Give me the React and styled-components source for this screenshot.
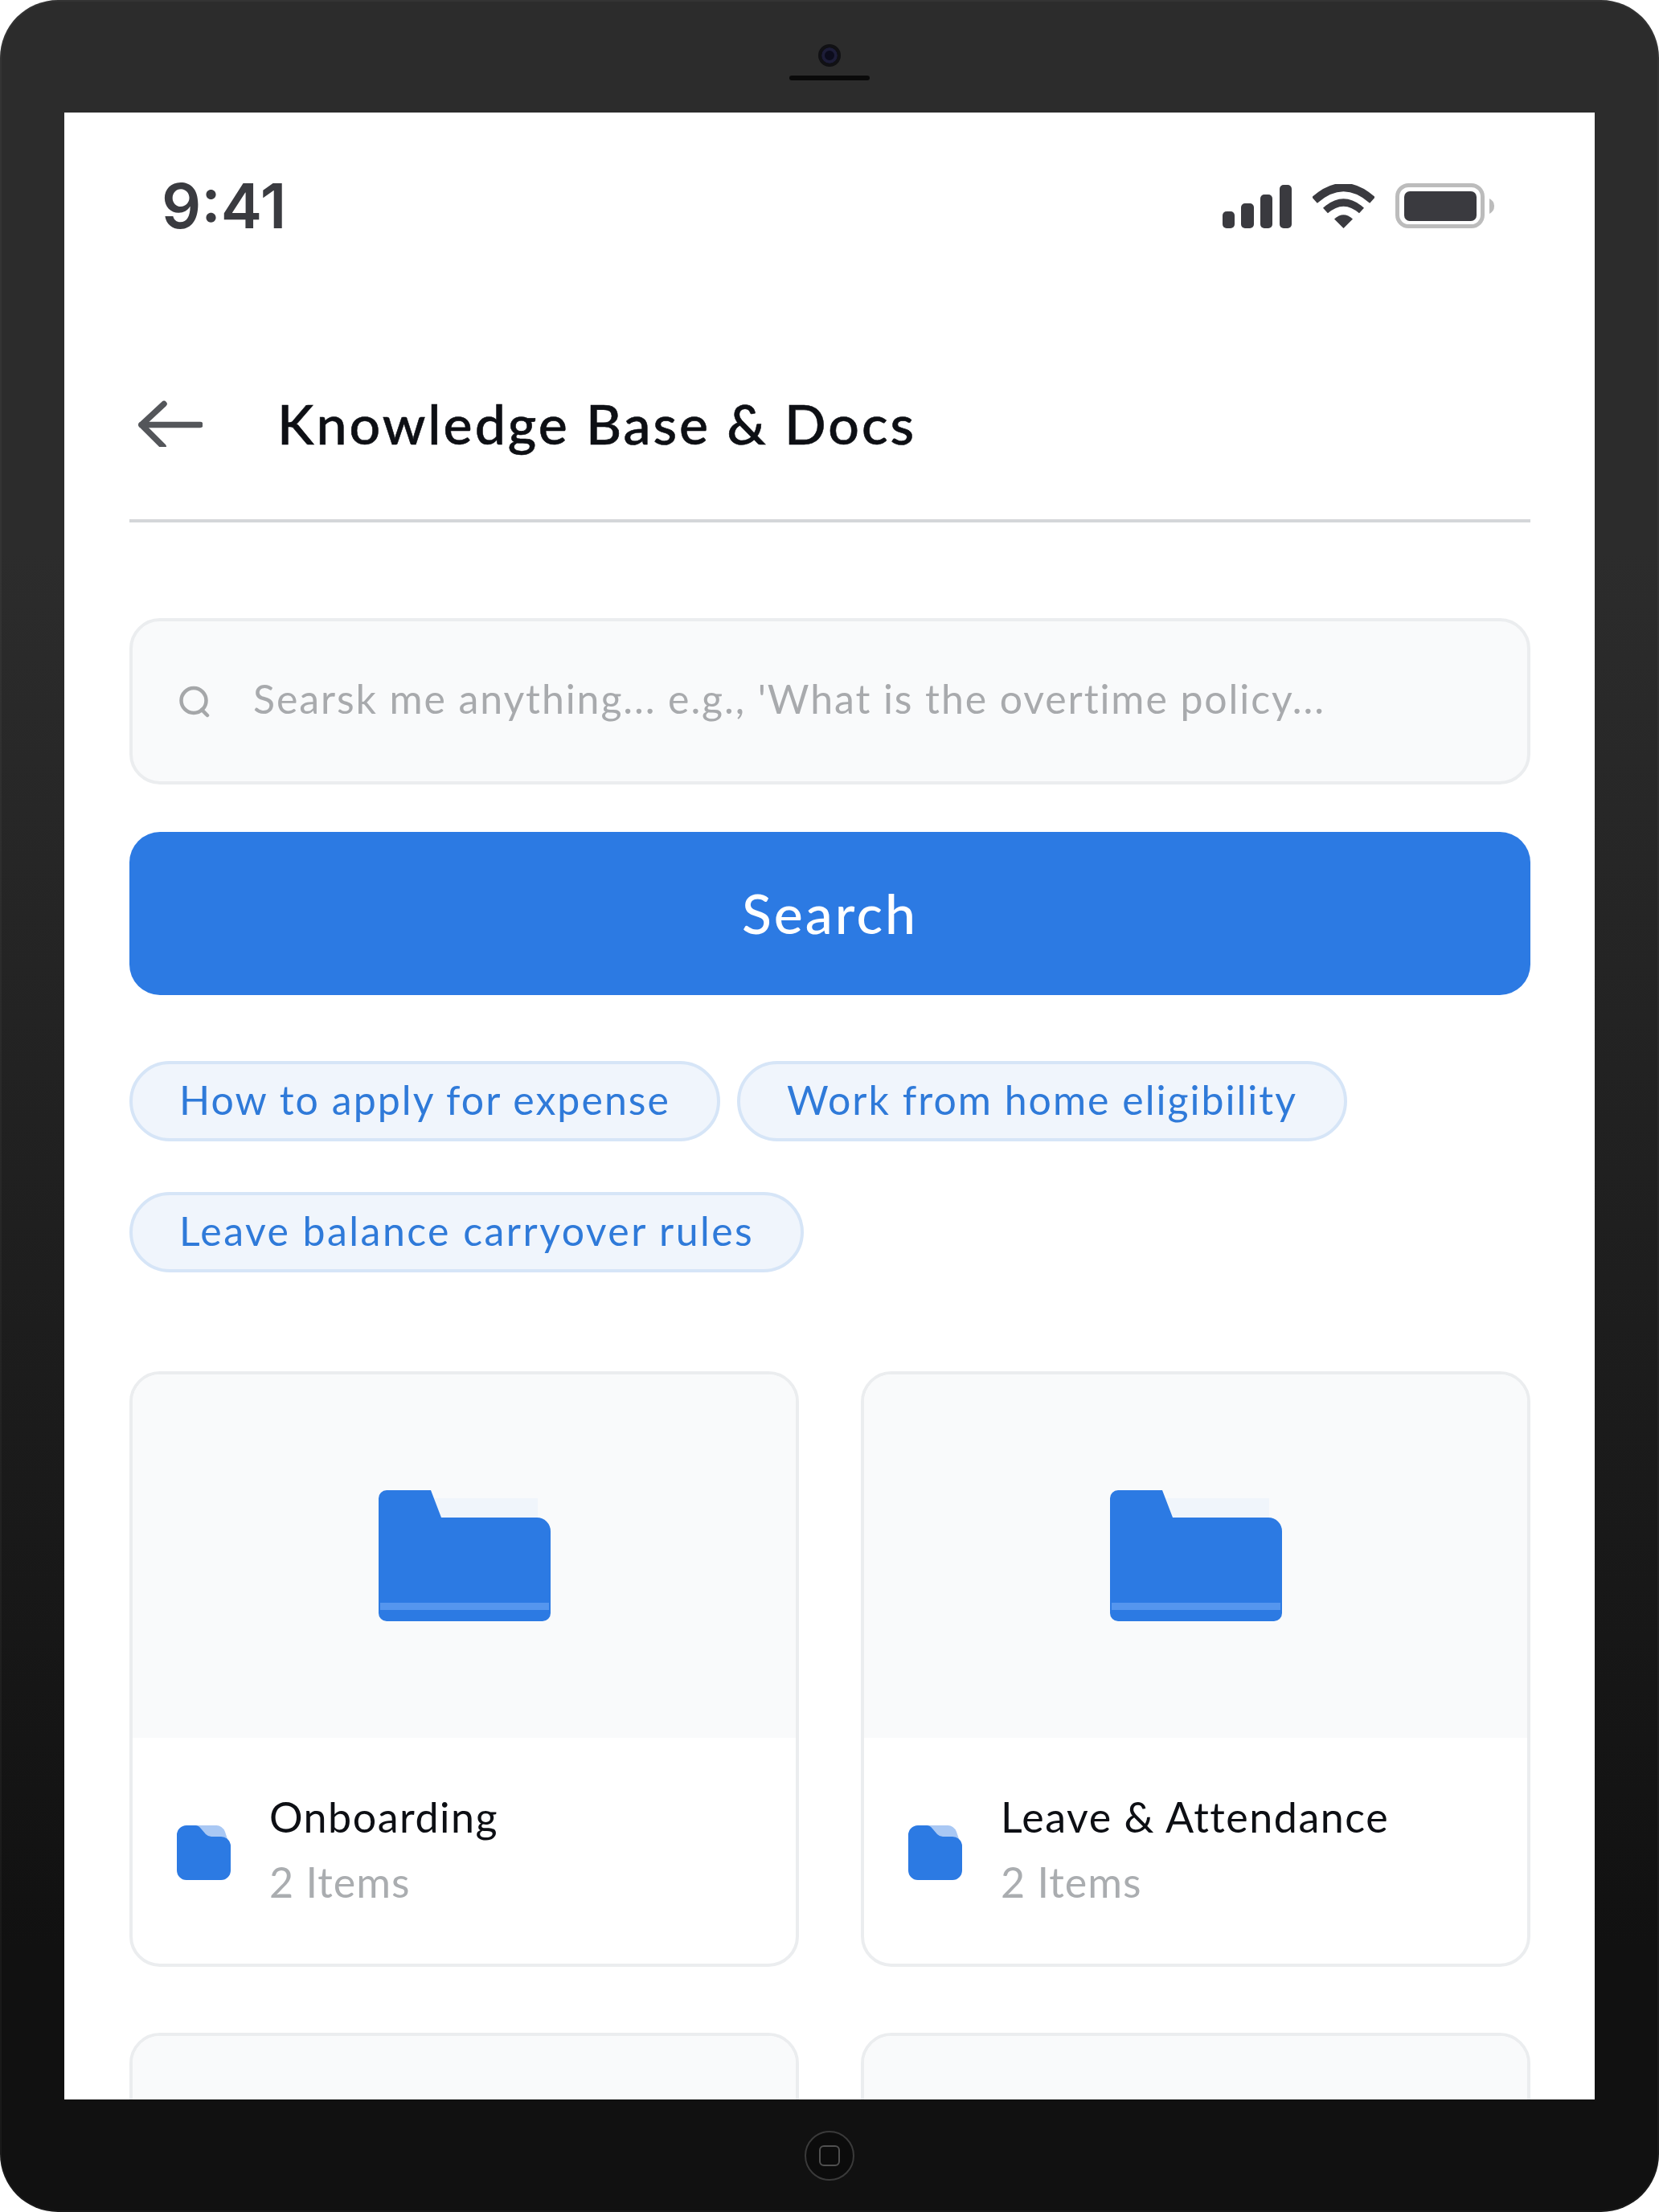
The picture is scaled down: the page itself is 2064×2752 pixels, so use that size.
import React from 'react';
import styled, { createGlobalStyle } from 'styled-components';

const BLUE = '#2c7ae3';

const GlobalStyle = createGlobalStyle`
    html, body {
        margin: 0;
        padding: 0;
        background: #ffffff;
    }
    * {
        box-sizing: border-box;
    }
`;

const SignalIcon = () => (
    <StatusSvg width="86" height="54" viewBox="0 0 86 54">
        <rect x="0" y="33" width="15" height="21" rx="5" />
        <rect x="23" y="23" width="16" height="31" rx="5" />
        <rect x="47" y="12" width="15" height="42" rx="5" />
        <rect x="71" y="0" width="15" height="54" rx="5" />
    </StatusSvg>
);

const WifiIcon = () => (
    <StatusSvg width="77" height="55" viewBox="0 0 77 55">
        <path d="M2.5 20 Q38.5 -12 74.5 20" fill="none" stroke="#3a3a3f" strokeWidth="10" />
        <path d="M16 33 Q38.5 13 61 33" fill="none" stroke="#3a3a3f" strokeWidth="9" />
        <path d="M27 43.5 Q38.5 33 50 43.5 L38.5 55 Z" />
    </StatusSvg>
);

const BatteryIcon = () => (
    <StatusSvg width="123" height="56" viewBox="0 0 123 56">
        <rect x="2.5" y="2.5" width="106" height="51" rx="14" fill="none" stroke="#bcbcbc" strokeWidth="5" />
        <rect x="11" y="10" width="90" height="37" rx="7" />
        <path d="M117 19 Q123 22 123 28.5 Q123 35 117 38 Z" fill="#bcbcbc" />
    </StatusSvg>
);

const BackArrow = () => (
    <svg width="80" height="60" viewBox="0 -3 80 60" fill="none" stroke="#54565a" strokeWidth="7.5" strokeLinecap="round" strokeLinejoin="round">
        <path d="M4 29.5 H77" />
        <path d="M32 3.5 L4 29.5 L31 56.5" />
    </svg>
);

const SearchIcon = () => (
    <svg width="40" height="40" viewBox="0 0 40 40" fill="none" stroke="#a5a7a9" strokeWidth="4.5" strokeLinecap="round">
        <circle cx="19" cy="18.5" r="15.5" />
        <path d="M29 30 L36 37" />
    </svg>
);

const BigFolder = () => (
    <svg width="214" height="163" viewBox="0 0 214 163">
        <rect x="60" y="10" width="138" height="30" fill="#f0f5fb" />
        <path
            d="M0 10 a10 10 0 0 1 10 -10 H65 L78 34 H197 a17 17 0 0 1 17 17 V153 a10 10 0 0 1 -10 10 H10 a10 10 0 0 1 -10 -10 Z"
            fill={BLUE}
        />
        <rect x="2" y="140" width="210" height="9" fill="#5596ee" />
    </svg>
);

const SmallFolder = () => (
    <FolderSvg width="67" height="68" viewBox="0 0 67 68">
        <path d="M22 0 H48 a12 12 0 0 1 12 8 L64 20 H36 Z" fill="#a9c8f4" />
        <path
            d="M0 12 a12 12 0 0 1 12 -12 H23 q4 0 7 4 L36 11 q3 3 7 3 H55 a12 12 0 0 1 12 12 V56 a12 12 0 0 1 -12 12 H12 a12 12 0 0 1 -12 -12 Z"
            fill={BLUE}
        />
    </FolderSvg>
);

const chips = [
    [
        { text: 'How to apply for expense', tracking: 2.05 },
        { text: 'Work from home eligibility', tracking: 2 },
    ],
    [{ text: 'Leave balance carryover rules', tracking: 2.45 }],
];

const cards = [
    { title: 'Onboarding', count: '2 Items' },
    { title: 'Leave & Attendance', count: '2 Items' },
    {},
    {},
];

const App = () => {
    return (
        <React.Fragment>
            <GlobalStyle />
            <Frame>
                <TopBezel>
                    <Camera />
                    <Speaker />
                </TopBezel>
                <Screen>
                    <StatusBar>
                        <Time>9:41</Time>
                        <StatusIcons>
                            <SignalIcon />
                            <WifiIcon />
                            <BatteryIcon />
                        </StatusIcons>
                    </StatusBar>
                    <Content>
                        <Header>
                            <BackArrow />
                            <Title>Knowledge Base &amp; Docs</Title>
                        </Header>
                        <SearchBox>
                            <SearchIcon />
                            <Placeholder>Searsk me anything... e.g., 'What is the overtime policy...</Placeholder>
                        </SearchBox>
                        <SearchButton>Search</SearchButton>
                        <ChipList>
                            {chips.map((row, i) => (
                                <ChipRow key={i}>
                                    {row.map((chip) => (
                                        <Chip key={chip.text} $tracking={chip.tracking}>{chip.text}</Chip>
                                    ))}
                                </ChipRow>
                            ))}
                        </ChipList>
                        <CardGrid>
                            {cards.map((card, i) => (
                                <Card key={i}>
                                    <CardCover>
                                        <BigFolder />
                                    </CardCover>
                                    {card.title && (
                                        <CardInfo>
                                            <SmallFolder />
                                            <div>
                                                <CardTitle>{card.title}</CardTitle>
                                                <CardCount>{card.count}</CardCount>
                                            </div>
                                        </CardInfo>
                                    )}
                                </Card>
                            ))}
                        </CardGrid>
                    </Content>
                </Screen>
                <BottomBezel>
                    <HomeButton>
                        <HomeSquare />
                    </HomeButton>
                </BottomBezel>
            </Frame>
        </React.Fragment>
    );
};

const Frame = styled.div`
    width: 2064px;
    height: 2752px;
    display: flex;
    flex-direction: column;
    border-radius: 72px;
    overflow: hidden;
    background: linear-gradient(180deg, #2c2c2c 25%, #111111 88%);
    box-shadow: inset 0 0 0 2px rgba(255, 255, 255, 0.04);
`;

const TopBezel = styled.div`
    height: 140px;
    flex: none;
    padding-top: 55px;
    display: flex;
    flex-direction: column;
    align-items: center;
    gap: 11px;
`;

const Camera = styled.div`
    width: 28px;
    height: 28px;
    border-radius: 50%;
    background: #0c0c1c;
    border: 4px solid #111114;
    box-shadow: inset 0 0 0 4px #1d1d38;
`;

const Speaker = styled.div`
    width: 100px;
    height: 6px;
    border-radius: 3px;
    background: #0a0a0a;
`;

const Screen = styled.div`
    flex: 1;
    min-height: 0;
    margin: 0 80px;
    background: #ffffff;
    overflow: hidden;
`;

const BottomBezel = styled.div`
    height: 140px;
    flex: none;
    display: flex;
    justify-content: center;
    padding-top: 39px;
`;

const HomeButton = styled.div`
    width: 62px;
    height: 62px;
    border-radius: 50%;
    border: 2px solid #3a3a3a;
    background: #0c0c0c;
    display: flex;
    align-items: center;
    justify-content: center;
`;

const HomeSquare = styled.div`
    width: 26px;
    height: 26px;
    border-radius: 6px;
    border: 2px solid #505050;
`;

const StatusBar = styled.div`
    height: 232px;
    padding: 0 125px 0 121px;
    display: flex;
    align-items: center;
    justify-content: space-between;
`;

const Time = styled.div`
    font-family: Inter, 'Liberation Sans', sans-serif;
    font-size: 77px;
    font-weight: 600;
    color: #3a3b40;
`;

const StatusIcons = styled.div`
    display: flex;
    align-items: flex-end;
    gap: 26px;
`;

const StatusSvg = styled.svg`
    display: block;
    fill: #3a3a3f;
`;

const Content = styled.div`
    padding: 0 80px 0 81px;
    font-family: Lato, 'Noto Sans', sans-serif;
`;

const Header = styled.div`
    height: 278px;
    padding: 34px 0 0 11px;
    display: flex;
    align-items: center;
    gap: 93px;
    border-bottom: 4px solid #d4d6d9;
`;

const Title = styled.div`
    font-size: 68px;
    font-weight: 500;
    letter-spacing: 3px;
    color: #0d0f14;
    -webkit-text-stroke: 0.6px #0d0f14;
`;

const SearchBox = styled.div`
    margin-top: 119px;
    height: 207px;
    padding-left: 57px;
    display: flex;
    align-items: center;
    gap: 53px;
    background: #f9fafb;
    border: 4px solid #ebedef;
    border-radius: 38px;
`;

const Placeholder = styled.span`
    font-size: 50px;
    letter-spacing: 1.9px;
    color: #a8aaad;
    white-space: nowrap;
    margin-bottom: 7px;
`;

const SearchButton = styled.div`
    margin-top: 59px;
    height: 203px;
    padding-bottom: 3px;
    display: flex;
    align-items: center;
    justify-content: center;
    background: ${BLUE};
    border-radius: 38px;
    color: #ffffff;
    font-size: 68px;
    font-weight: 500;
    letter-spacing: 3px;
`;

const ChipList = styled.div`
    margin-top: 82px;
    display: flex;
    flex-direction: column;
    gap: 63px;
`;

const ChipRow = styled.div`
    display: flex;
    gap: 21px;
`;

const Chip = styled.div`
    height: 100px;
    padding: 0 58px 5px;
    display: flex;
    align-items: center;
    border-radius: 50px;
    background: #f0f5fc;
    border: 4px solid #d6e5f7;
    color: #2f7ad9;
    font-size: 50px;
    letter-spacing: ${(props) => props.$tracking}px;
    white-space: nowrap;
`;

const CardGrid = styled.div`
    margin-top: 123px;
    display: grid;
    grid-template-columns: 833px 833px;
    column-gap: 77px;
    row-gap: 82px;
`;

const Card = styled.div`
    height: 741px;
    border: 4px solid #ebedef;
    border-radius: 38px;
    overflow: hidden;
    background: #ffffff;
`;

const CardCover = styled.div`
    height: 452px;
    padding-bottom: 2px;
    display: flex;
    align-items: center;
    justify-content: center;
    background: #f9fafb;
`;

const CardInfo = styled.div`
    height: 281px;
    padding: 0 0 4px 55px;
    display: flex;
    align-items: center;
    gap: 48px;
`;

const FolderSvg = styled.svg`
    margin-top: 8px;
`;

const CardTitle = styled.div`
    font-size: 52px;
    line-height: 81px;
    letter-spacing: 1.5px;
    color: #0d0f14;
`;

const CardCount = styled.div`
    font-size: 52px;
    line-height: 81px;
    letter-spacing: 1px;
    color: #aaadb0;
`;

export default App;
